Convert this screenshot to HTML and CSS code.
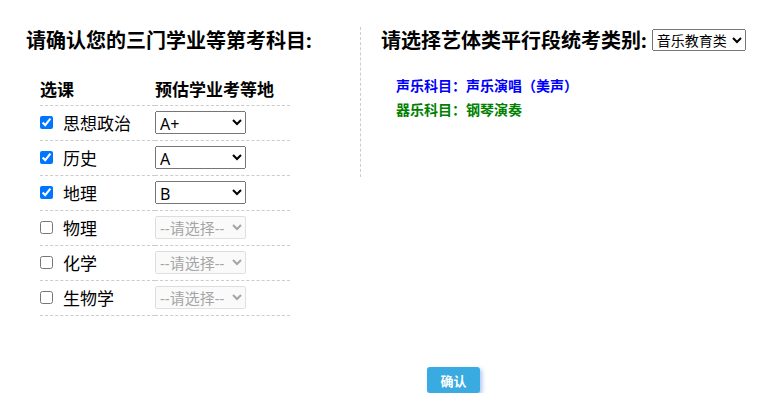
FILE: index.html
```html
<!DOCTYPE html>
<html lang="zh-CN">
<head>
    <meta charset="UTF-8">
    <meta name="viewport" content="width=device-width, initial-scale=1.0">
    <title>学业考科目确认</title>
    <link rel="stylesheet" href="styles.css">
</head>
<body>
    <div class="page">
        <div class="left">
            <h2 class="title">请确认您的三门学业等第考科目:</h2>
            <table class="subjects">
                <tr>
                    <th class="col-pick">选课</th>
                    <th>预估学业考等地</th>
                </tr>
                <tr>
                    <td><label><input type="checkbox" checked> 思想政治</label></td>
                    <td><select><option>A+</option></select></td>
                </tr>
                <tr>
                    <td><label><input type="checkbox" checked> 历史</label></td>
                    <td><select><option>A</option></select></td>
                </tr>
                <tr>
                    <td><label><input type="checkbox" checked> 地理</label></td>
                    <td><select><option>B</option></select></td>
                </tr>
                <tr>
                    <td><label><input type="checkbox"> 物理</label></td>
                    <td><select disabled><option>--请选择--</option></select></td>
                </tr>
                <tr>
                    <td><label><input type="checkbox"> 化学</label></td>
                    <td><select disabled><option>--请选择--</option></select></td>
                </tr>
                <tr>
                    <td><label><input type="checkbox"> 生物学</label></td>
                    <td><select disabled><option>--请选择--</option></select></td>
                </tr>
            </table>
        </div>

        <div class="right">
            <h2 class="title">请选择艺体类平行段统考类别:
                <select class="kind"><option>音乐教育类</option></select>
            </h2>
            <div class="items">
                <p class="vocal">声乐科目：声乐演唱（美声）</p>
                <p class="instrument">器乐科目：钢琴演奏</p>
            </div>
        </div>
    </div>

    <div class="footer">
        <button class="btn">确认</button>
    </div>
</body>
</html>
```

FILE: styles.css
```css
body{
    margin: 0;
    font-family: "Noto Sans", "Noto Sans CJK SC", sans-serif;
    color: #000;
}
.page{
    display: flex;
    align-items: flex-start;
    padding-top: 27px;
    padding-left: 26px;
}
.left{
    width: 334px;
}
.title{
    margin: 0;
    font-size: 20px;
    line-height: 28px;
    font-weight: bold;
}
.subjects{
    margin-top: 16px;
    margin-left: 14px;
    width: 250px;
    border-collapse: collapse;
}
.subjects th{
    text-align: left;
    font-size: 17px;
    height: 34px;
    padding: 0;
    border-bottom: 1px dashed #ccc;
}
.subjects td{
    height: 32px;
    padding: 0 0 2px 0;
    font-size: 17px;
    border-bottom: 1px dashed #ccc;
}
.col-pick{
    width: 115px;
}
.subjects label{
    display: flex;
    align-items: center;
}
.subjects input{
    margin: 0 10px 0 0;
    width: 13px;
    height: 13px;
}
.subjects select{
    width: 91px;
    height: 23px;
    font-size: 16px;
    font-family: "Noto Sans", "Noto Sans CJK SC", sans-serif;
    display: block;
}
.subjects select:disabled{
    font-size: 15px;
}
.right{
    border-left: 1px dashed #ccc;
    padding-left: 20px;
    height: 150px;
}
.kind{
    width: 94px;
    height: 22px;
    font-size: 14px;
    font-family: "Noto Sans", "Noto Sans CJK SC", sans-serif;
    vertical-align: 2px;
    margin-left: 0;
}
.items{
    padding-left: 15px;
    padding-top: 19px;
}
.items p{
    margin: 0;
    font-size: 14px;
    font-weight: bold;
    line-height: 24px;
}
.vocal{
    color: #0000ff;
}
.instrument{
    color: #008000;
}
.footer{
    padding-left: 427px;
    padding-top: 51px;
}
.btn{
    width: 53px;
    height: 26px;
    border: none;
    border-radius: 3px;
    background: #3aabe0;
    color: #fff;
    font-size: 13px;
    font-weight: bold;
    font-family: "Noto Sans", "Noto Sans CJK SC", sans-serif;
    box-shadow: 2px 2px 4px rgba(90, 140, 230, 0.5);
}
```
